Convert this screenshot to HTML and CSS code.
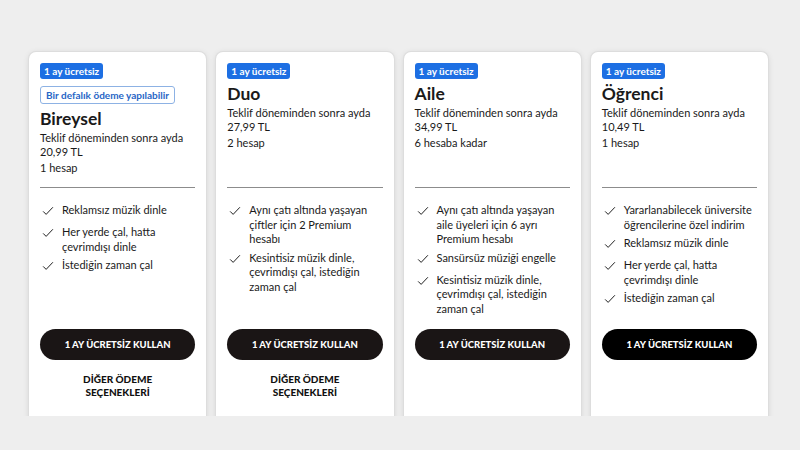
FILE: index.html
```html
<!DOCTYPE html>
<html lang="tr">
  <head>
    <meta charset="UTF-8" />
    <title>Premium Planlar</title>
    <link rel="stylesheet" href="styles.css">
  </head>
  <body>
    <main class="plans">
      <article class="plan">
        <div class="plan-head">
          <span class="tag">1 ay ücretsiz</span>
          <span class="tag tag-outline">Bir defalık ödeme yapılabilir</span>
          <h2>Bireysel</h2>
          <p class="price">Teklif döneminden sonra ayda<br>20,99 TL</p>
          <p class="accounts">1 hesap</p>
        </div>
        <ul class="features">
          <li><svg class="check" viewBox="0 0 16 16"><path d="M1.5 8.5 L5.5 12.5 L14.5 3"/></svg><span>Reklamsız müzik dinle</span></li>
          <li><svg class="check" viewBox="0 0 16 16"><path d="M1.5 8.5 L5.5 12.5 L14.5 3"/></svg><span>Her yerde çal, hatta çevrimdışı dinle</span></li>
          <li><svg class="check" viewBox="0 0 16 16"><path d="M1.5 8.5 L5.5 12.5 L14.5 3"/></svg><span>İstediğin zaman çal</span></li>
        </ul>
        <div class="plan-foot">
          <button class="cta">1 AY ÜCRETSİZ KULLAN</button>
          <a class="other" href="#">DİĞER ÖDEME<br>SEÇENEKLERİ</a>
        </div>
      </article>

      <article class="plan">
        <div class="plan-head">
          <span class="tag">1 ay ücretsiz</span>
          <h2>Duo</h2>
          <p class="price">Teklif döneminden sonra ayda<br>27,99 TL</p>
          <p class="accounts">2 hesap</p>
        </div>
        <ul class="features">
          <li><svg class="check" viewBox="0 0 16 16"><path d="M1.5 8.5 L5.5 12.5 L14.5 3"/></svg><span>Aynı çatı altında yaşayan çiftler için 2 Premium hesabı</span></li>
          <li><svg class="check" viewBox="0 0 16 16"><path d="M1.5 8.5 L5.5 12.5 L14.5 3"/></svg><span>Kesintisiz müzik dinle, çevrimdışı çal, istediğin zaman çal</span></li>
        </ul>
        <div class="plan-foot">
          <button class="cta">1 AY ÜCRETSİZ KULLAN</button>
          <a class="other" href="#">DİĞER ÖDEME<br>SEÇENEKLERİ</a>
        </div>
      </article>

      <article class="plan">
        <div class="plan-head">
          <span class="tag">1 ay ücretsiz</span>
          <h2>Aile</h2>
          <p class="price">Teklif döneminden sonra ayda<br>34,99 TL</p>
          <p class="accounts">6 hesaba kadar</p>
        </div>
        <ul class="features">
          <li><svg class="check" viewBox="0 0 16 16"><path d="M1.5 8.5 L5.5 12.5 L14.5 3"/></svg><span>Aynı çatı altında yaşayan aile üyeleri için 6 ayrı Premium hesabı</span></li>
          <li><svg class="check" viewBox="0 0 16 16"><path d="M1.5 8.5 L5.5 12.5 L14.5 3"/></svg><span>Sansürsüz müziği engelle</span></li>
          <li><svg class="check" viewBox="0 0 16 16"><path d="M1.5 8.5 L5.5 12.5 L14.5 3"/></svg><span>Kesintisiz müzik dinle, çevrimdışı çal, istediğin zaman çal</span></li>
        </ul>
        <div class="plan-foot">
          <button class="cta">1 AY ÜCRETSİZ KULLAN</button>
        </div>
      </article>

      <article class="plan">
        <div class="plan-head">
          <span class="tag">1 ay ücretsiz</span>
          <h2>Öğrenci</h2>
          <p class="price">Teklif döneminden sonra ayda<br>10,49 TL</p>
          <p class="accounts">1 hesap</p>
        </div>
        <ul class="features">
          <li><svg class="check" viewBox="0 0 16 16"><path d="M1.5 8.5 L5.5 12.5 L14.5 3"/></svg><span>Yararlanabilecek üniversite öğrencilerine özel indirim</span></li>
          <li><svg class="check" viewBox="0 0 16 16"><path d="M1.5 8.5 L5.5 12.5 L14.5 3"/></svg><span>Reklamsız müzik dinle</span></li>
          <li><svg class="check" viewBox="0 0 16 16"><path d="M1.5 8.5 L5.5 12.5 L14.5 3"/></svg><span>Her yerde çal, hatta çevrimdışı dinle</span></li>
          <li><svg class="check" viewBox="0 0 16 16"><path d="M1.5 8.5 L5.5 12.5 L14.5 3"/></svg><span>İstediğin zaman çal</span></li>
        </ul>
        <div class="plan-foot">
          <button class="cta cta-dark">1 AY ÜCRETSİZ KULLAN</button>
        </div>
      </article>
    </main>
  </body>
</html>
```

FILE: styles.css
```css
body {
  margin: 0;
  background-color: #eeeeee;
  font-family: Lato, sans-serif;
  color: #1a1a1a;
}

.plans {
  height: 416px;
  box-sizing: border-box;
  overflow: hidden;
  padding: 52px 32px 0 29px;
  display: grid;
  grid-template-columns: repeat(4, 1fr);
  gap: 10px;
  align-items: start;
}

.plan {
  background-color: #fff;
  border-radius: 7px;
  box-shadow: 0 0 0 1px #dddddd, 0 1px 6px rgba(0, 0, 0, 0.12);
  padding: 11px 11px 0;
  height: 400px;
}

.plan-head {
  height: 125px;
  box-sizing: border-box;
  border-bottom: 1px solid #8c8c8c;
  display: flex;
  flex-direction: column;
  align-items: flex-start;
}

.tag {
  background-color: #1d6fe3;
  color: #fff;
  font-weight: 700;
  font-size: 10px;
  line-height: 16px;
  padding: 0 4px;
  border-radius: 3px;
}

.tag-outline {
  background-color: #fff;
  color: #2866c6;
  border: 1px solid #8db2e4;
  padding: 0 5px;
  margin-top: 7px;
}

h2 {
  font-size: 17.5px;
  line-height: 20px;
  margin: 5px 0 0;
}

.price {
  font-size: 11px;
  line-height: 14px;
  margin: 2px 0 0;
}

.accounts {
  font-size: 11px;
  line-height: 14px;
  margin: 2px 0 0;
}

.features {
  list-style: none;
  margin: 0;
  padding: 15px 0 0;
  height: 141px;
  box-sizing: border-box;
}

.features li {
  display: flex;
  gap: 8px;
  min-height: 18px;
  font-size: 11px;
  line-height: 14.5px;
  margin-bottom: 4px;
}

.check {
  flex: none;
  width: 12px;
  height: 12px;
  margin: 2px 0 0 2px;
  fill: none;
  stroke: #1a1a1a;
  stroke-width: 1.3;
}

.cta {
  display: block;
  width: 100%;
  height: 31px;
  border: none;
  border-radius: 16px;
  background-color: #1a1515;
  color: #fff;
  font-family: Lato, sans-serif;
  font-weight: 900;
  font-size: 9.5px;
  cursor: pointer;
}

.cta-dark {
  background-color: #000;
}

.other {
  display: block;
  margin-top: 13px;
  text-align: center;
  font-weight: 900;
  font-size: 10px;
  line-height: 13px;
  color: #111;
  text-decoration: none;
}
```
